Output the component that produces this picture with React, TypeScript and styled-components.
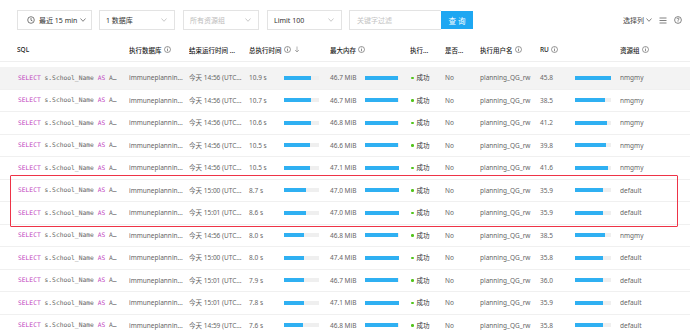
import React from 'react';
import styled, { createGlobalStyle } from 'styled-components';

const Global = createGlobalStyle`
  html, body { margin: 0; padding: 0; background: #fff; }
  body {
    font-family: "Noto Sans", "Noto Sans CJK SC", sans-serif;
    font-size: 6.5px;
    color: #333;
  }
`;

const Page = styled.div`
  position: relative;
  width: 690px;
  height: 333px;
  overflow: hidden;
  padding-top: 10px;
  box-sizing: border-box;
`;

const Toolbar = styled.div`
  display: flex;
  align-items: center;
  height: 20px;
  padding: 0 8px 0 17px;
  white-space: nowrap;
`;

const Select = styled.div<{ $w: number; $gap?: number; $muted?: boolean; $tight?: boolean }>`
  width: ${(p) => p.$w}px;
  height: 20px;
  margin-right: ${(p) => p.$gap ?? 8}px;
  box-sizing: border-box;
  border: 1px solid #e3e3e3;
  display: flex;
  align-items: center;
  justify-content: ${(p) => (p.$tight ? 'flex-start' : 'space-between')};
  padding: 0 7px 0 ${(p) => (p.$tight ? 9 : 6)}px;
  color: ${(p) => (p.$muted ? '#bdbdbd' : '#333')};
  font-size: 7px;
  gap: 3px;
  white-space: nowrap;
  flex: none;
`;

const Chevron = styled.svg<{ $dark?: boolean }>`
  width: 6px;
  height: 4px;
  flex: none;
  stroke: ${(p) => (p.$dark ? '#777' : '#c4c4c4')};
  fill: none;
  stroke-width: 0.9;
`;

const Input = styled.div`
  width: 92px;
  height: 20px;
  box-sizing: border-box;
  border: 1px solid #e3e3e3;
  border-right: none;
  display: flex;
  align-items: center;
  padding-left: 7px;
  color: #c4c4c4;
  font-size: 7px;
  flex: none;
`;

const Button = styled.div`
  width: 32px;
  height: 18px;
  background: #1ea7f2;
  color: #fff;
  display: flex;
  align-items: center;
  justify-content: center;
  font-size: 7.5px;
  letter-spacing: 2px;
  padding-left: 2px;
  box-sizing: border-box;
  flex: none;
`;

const RightTools = styled.div`
  margin-left: auto;
  display: flex;
  align-items: center;
  gap: 7px;
  color: #444;
  font-size: 7px;
`;

const ColPick = styled.div`
  display: flex;
  align-items: center;
  gap: 2px;
`;

const Table = styled.div`
  margin-top: 8px;
`;

const HeadRow = styled.div`
  display: grid;
  grid-template-columns: 112px 60px 60px 81px 80px 35px 35px 60px 80px 1fr;
  height: 23px;
  align-items: center;
  padding-left: 17px;
  border-bottom: 1px solid #efefef;
  margin-bottom: 5px;
  color: #222;
  font-weight: 500;
`;

const HeadCell = styled.div`
  display: flex;
  align-items: center;
  gap: 2px;
  white-space: nowrap;
  overflow: hidden;
`;

const Row = styled.div<{ $hover?: boolean }>`
  display: grid;
  grid-template-columns: 112px 60px 60px 81px 80px 35px 35px 60px 80px 1fr;
  height: 22.5px;
  box-sizing: border-box;
  align-items: center;
  padding-left: 17px;
  border-bottom: 1px solid #f0f0f0;
  background: ${(p) => (p.$hover ? '#f3f3f3' : '#fff')};
  color: #666;
`;

const Cell = styled.div<{ $dark?: boolean }>`
  white-space: nowrap;
  overflow: hidden;
  color: ${(p) => (p.$dark ? '#333' : 'inherit')};
  display: flex;
  align-items: center;
  line-height: 1.4;
`;

const Sql = styled.span`
  font-family: "DejaVu Sans Mono", "Liberation Mono", monospace;
  font-size: 6.3px;
  line-height: 10px;
  color: #666;
  padding-left: 1px;
`;

const Kw = styled.span`
  color: #bf46c0;
`;

const BarCell = styled.div`
  display: grid;
  grid-template-columns: 35px auto;
  align-items: center;
  white-space: nowrap;
`;

const Track = styled.div<{ $w: number }>`
  width: ${(p) => p.$w}px;
  height: 4px;
  background: #efefef;
  display: flex;
`;

const Fill = styled.div`
  height: 100%;
  background: #2fb0f2;
`;

const Dot = styled.span`
  width: 2.5px;
  height: 2.5px;
  border-radius: 50%;
  background: #52c41a;
  margin: 0 3px 0 1px;
  flex: none;
`;

const Highlight = styled.div`
  position: absolute;
  left: 10px;
  top: 175px;
  width: 668px;
  height: 52px;
  box-sizing: border-box;
  border: 1.5px solid #ee3347;
  border-radius: 1px;
  pointer-events: none;
`;

const Info = () => (
  <svg width="7" height="7" viewBox="0 0 14 14" style={{ flex: 'none' }}>
    <circle cx="7" cy="7" r="6" fill="none" stroke="#555" strokeWidth="1.2" />
    <line x1="7" y1="6" x2="7" y2="10.5" stroke="#555" strokeWidth="1.3" />
    <circle cx="7" cy="4" r="0.9" fill="#555" />
  </svg>
);

const SortDown = () => (
  <svg width="6" height="7" viewBox="0 0 12 14" style={{ flex: 'none', marginLeft: 1 }}>
    <line x1="6" y1="1" x2="6" y2="12" stroke="#888" strokeWidth="1.3" />
    <polyline points="2,8 6,12 10,8" fill="none" stroke="#888" strokeWidth="1.3" />
  </svg>
);

const Clock = () => (
  <svg width="8" height="8" viewBox="0 0 16 16" style={{ flex: 'none' }}>
    <circle cx="8" cy="8" r="6.6" fill="none" stroke="#444" strokeWidth="1.4" />
    <polyline points="8,4 8,8.5 11,10" fill="none" stroke="#444" strokeWidth="1.4" />
  </svg>
);

const Down = ({ dark }: { dark?: boolean }) => (
  <Chevron $dark={dark} viewBox="0 0 6 4">
    <polyline points="0.5,0.5 3,3.3 5.5,0.5" />
  </Chevron>
);

const MenuIcon = () => (
  <svg width="8" height="7" viewBox="0 0 16 14">
    <line x1="1" y1="2" x2="15" y2="2" stroke="#555" strokeWidth="1.5" />
    <line x1="1" y1="7" x2="15" y2="7" stroke="#555" strokeWidth="1.5" />
    <line x1="1" y1="12" x2="15" y2="12" stroke="#555" strokeWidth="1.5" />
  </svg>
);

const HelpIcon = () => (
  <svg width="8" height="8" viewBox="0 0 16 16">
    <circle cx="8" cy="8" r="6.8" fill="none" stroke="#555" strokeWidth="1.4" />
    <path d="M5.8 6.2 Q5.8 4.2 8 4.2 Q10.2 4.2 10.2 6 Q10.2 7.3 8 8.2 L8 9.6" fill="none" stroke="#555" strokeWidth="1.3" />
    <circle cx="8" cy="11.6" r="0.9" fill="#555" />
  </svg>
);

type R = { t: string; time: string; mem: number; ru: number; group: string };

const rows: R[] = [
  { t: '10.9', time: '14:56', mem: 46.7, ru: 45.8, group: 'nmgmy' },
  { t: '10.7', time: '14:56', mem: 46.7, ru: 38.5, group: 'nmgmy' },
  { t: '10.6', time: '14:56', mem: 46.8, ru: 41.2, group: 'nmgmy' },
  { t: '10.5', time: '14:56', mem: 46.6, ru: 39.8, group: 'nmgmy' },
  { t: '10.5', time: '14:56', mem: 47.1, ru: 41.6, group: 'nmgmy' },
  { t: '8.7', time: '15:00', mem: 47.0, ru: 35.9, group: 'default' },
  { t: '8.6', time: '15:01', mem: 47.0, ru: 35.9, group: 'default' },
  { t: '8.0', time: '14:56', mem: 46.8, ru: 38.5, group: 'nmgmy' },
  { t: '8.0', time: '15:00', mem: 47.4, ru: 35.8, group: 'default' },
  { t: '7.9', time: '15:01', mem: 46.7, ru: 36.0, group: 'default' },
  { t: '7.8', time: '15:01', mem: 47.1, ru: 35.9, group: 'default' },
  { t: '7.6', time: '14:59', mem: 46.8, ru: 35.8, group: 'default' },
];

const Bar = ({ value, max, w }: { value: number; max: number; w: number }) => (
  <Track $w={w}>
    <Fill style={{ width: `${Math.min(1, value / max) * 100}%` }} />
  </Track>
);

export default function App() {
  return (
    <Page>
      <Global />
      <Toolbar>
        <Select $w={75} $gap={7} $tight>
          <Clock />
          <span style={{ marginLeft: 1 }}>最近 15 min</span>
          <Down dark />
        </Select>
        <Select $w={76}>
          <span>1 数据库</span>
          <Down />
        </Select>
        <Select $w={76} $muted>
          <span>所有资源组</span>
          <Down />
        </Select>
        <Select $w={75} $gap={7}>
          <span>Limit 100</span>
          <Down />
        </Select>
        <Input>关键字过滤</Input>
        <Button>查询</Button>
        <RightTools>
          <ColPick>
            <span>选择列</span>
            <Down dark />
          </ColPick>
          <MenuIcon />
          <HelpIcon />
        </RightTools>
      </Toolbar>
      <Table>
        <HeadRow>
          <HeadCell>SQL</HeadCell>
          <HeadCell>执行数据库 <Info /></HeadCell>
          <HeadCell>结束运行时间 ...</HeadCell>
          <HeadCell>总执行时间 <Info /><SortDown /></HeadCell>
          <HeadCell>最大内存 <Info /></HeadCell>
          <HeadCell>执行...</HeadCell>
          <HeadCell>是否...</HeadCell>
          <HeadCell>执行用户名 <Info /></HeadCell>
          <HeadCell>RU <Info /></HeadCell>
          <HeadCell>资源组 <Info /></HeadCell>
        </HeadRow>
        {rows.map((r, i) => (
          <Row key={i} $hover={i === 0}>
            <Cell>
              <Sql>
                <Kw>SELECT</Kw> s.School_Name <Kw>AS</Kw> A…
              </Sql>
            </Cell>
            <Cell>immuneplannin...</Cell>
            <Cell>今天 {r.time} (UTC...</Cell>
            <BarCell>
              <span>{r.t} s</span>
              <Bar value={parseFloat(r.t)} max={14} w={35} />
            </BarCell>
            <BarCell>
              <span>{r.mem.toFixed(1)} MiB</span>
              <Bar value={r.mem} max={47.6} w={34} />
            </BarCell>
            <Cell $dark>
              <Dot />
              成功
            </Cell>
            <Cell>No</Cell>
            <Cell>planning_QG_rw</Cell>
            <BarCell>
              <span>{r.ru.toFixed(1)}</span>
              <Bar value={r.ru} max={45.8} w={36} />
            </BarCell>
            <Cell>{r.group}</Cell>
          </Row>
        ))}
      </Table>
      <Highlight />
    </Page>
  );
}
